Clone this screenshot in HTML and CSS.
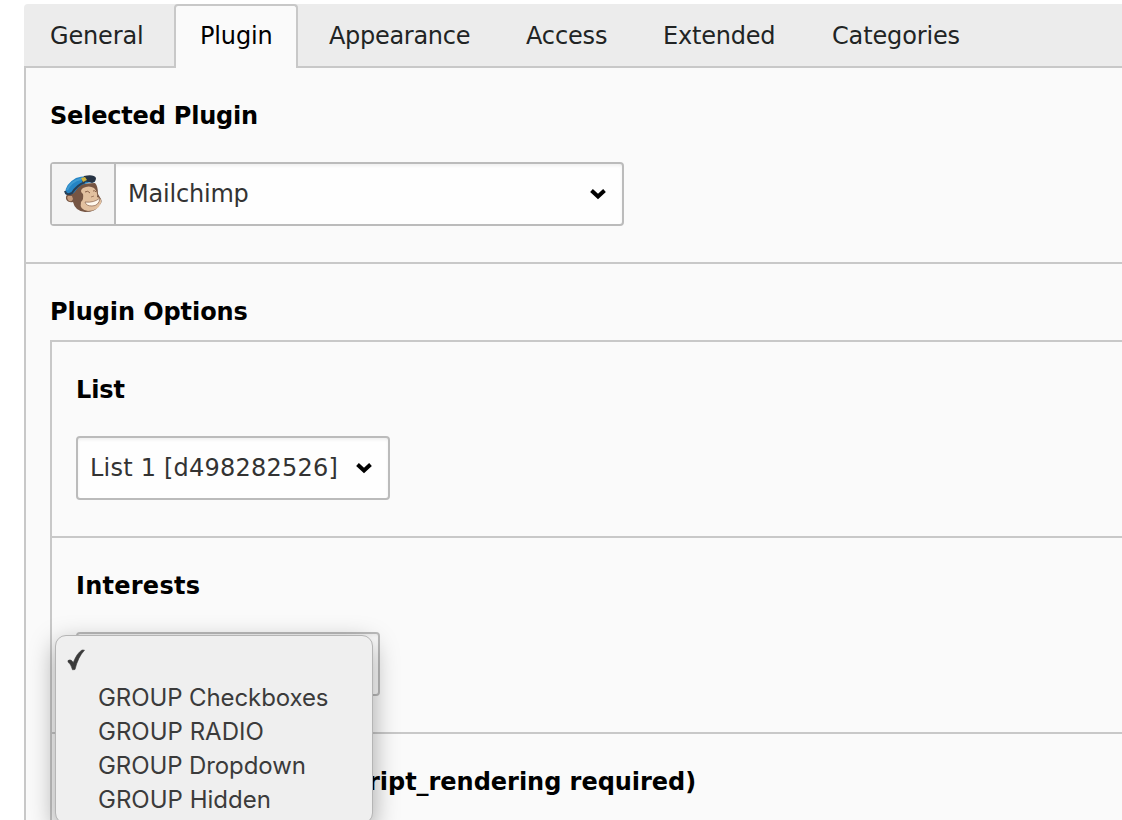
FILE: index.html
```
<!DOCTYPE html>
<html lang="en">
<head>
<meta charset="utf-8">
<title>Plugin</title>
<link rel="stylesheet" href="styles.css">
</head>
<body>
<nav class="tabs">
  <div class="tab t1">General</div>
  <div class="tab active">Plugin</div>
  <div class="tab t3">Appearance</div>
  <div class="tab t4">Access</div>
  <div class="tab t5">Extended</div>
  <div class="tab t6">Categories</div>
</nav>
<main class="pane">
  <section class="section first">
    <h4 class="label l1">Selected Plugin</h4>
    <div class="select plugin">
      <span class="addon">
        <svg width="40" height="40" viewBox="0 0 40 40">
          <path d="M8 19Q2 20 3 25Q5 29 10 28Q12 37 22 38Q33 38 35 32Q40 29 38 25L35 20Q35 12 32 9L14 10Z" fill="#765543"/>
          <path d="M5 22Q3 24 6 27Q9 28 10 25L9 22Z" fill="#c69c7c"/>
          <path d="M20 14Q26 11 31 14Q35 18 34 23Q39 24 38 29Q35 37 25 37Q16 36 18 28Q21 25 20 20Q16 17 20 14Z" fill="#e2c09f"/>
          <path d="M22 18q3-2 5 1M30 17q2-1 3 1" fill="none" stroke="#8a624a" stroke-width="1"/>
          <path d="M22 28Q31 29 37 24Q36 32 29 32Q23 32 22 28Z" fill="#fff8ed" stroke="#94705a" stroke-width=".8"/>
          <path d="M28 23l3-1" stroke="#a27c63" stroke-width="1"/>
          <path d="M2 20Q2 10 13 4Q21 1 30 3L32 8Q17 8 11 19L6 21Z" fill="#2584c4"/>
          <path d="M4 16Q8 7 18 5" fill="none" stroke="#3f9bd2" stroke-width="2"/>
          <path d="M2 17Q3 22 9 19Q14 11 22 8" fill="none" stroke="#263e56" stroke-width="2"/>
          <path d="M21 2Q31 0 33 4Q33 8 29 9Q26 7 19 8Z" fill="#263344"/>
          <path d="M18 4l4-1 2 3-4 2z" fill="#d2b43c"/>
        </svg>
      </span>
      <span class="value v1">Mailchimp</span>
      <svg class="chev" width="18" height="12" viewBox="0 0 18 12"><path d="M2.5 2.5L9 8.5L15.5 2.5" fill="none" stroke="#000" stroke-width="4"/></svg>
    </div>
  </section>
  <section class="options">
    <h4 class="label l2">Plugin Options</h4>
    <div class="group">
      <div class="field">
        <h4 class="label l3">List</h4>
        <div class="select list"><span class="value v2">List 1 [d498282526]</span>
          <svg class="chev" width="18" height="12" viewBox="0 0 18 12"><path d="M2.5 2.5L9 8.5L15.5 2.5" fill="none" stroke="#000" stroke-width="4"/></svg>
        </div>
      </div>
      <div class="field">
        <h4 class="label l4">Interests</h4>
        <div class="select interests"></div>
      </div>
      <div class="field last">
        <h4 class="label l5">ript_rendering required)</h4>
      </div>
    </div>
  </section>
</main>
<div class="menu">
  <div class="item check"><svg width="18" height="22" viewBox="0 0 18 22"><path d="M1 11.5Q4 9.5 6.3 13.5Q10 4 15 1L17.5 1.2Q11 8 8 20.5L5.5 20.8Q4 15 1 13Z" fill="#3b3b3b" stroke="#3b3b3b" stroke-width=".6"/></svg></div>
  <div class="item m1">GROUP Checkboxes</div>
  <div class="item m2">GROUP RADIO</div>
  <div class="item m3">GROUP Dropdown</div>
  <div class="item m4">GROUP Hidden</div>
</div>
</body>
</html>
```
FILE: styles.css
```
* { box-sizing: border-box; }
html { height: 820px; overflow: hidden; }
body { margin: 0; width: 1122px; height: 820px; overflow: hidden; position: relative; background: #fff; padding: 4px 0 0 24px; font: 24px/36px "DejaVu Sans", Verdana, sans-serif; color: #212424; white-space: nowrap; }
.tabs { display: flex; height: 64px; background: #ececec; border-radius: 4px 0 0 0; box-shadow: inset 0 -2px #c8c8c8; }
.tab { padding: 14px 0 0 26px; letter-spacing: -0.15px; }
.t1 { width: 150px; }
.active { width: 124px; padding-left: 24px; background: #fafafa; border: 2px solid #c8c8c8; border-bottom: 0; border-radius: 4px 4px 0 0; color: #000; padding-top: 12px; }
.t3 { width: 202px; padding-left: 31px; letter-spacing: -0.3px; }
.t4 { width: 137px; }
.t5 { width: 169px; letter-spacing: -0.2px; }
.pane { height: 752px; overflow: hidden; border-left: 2px solid #c8c8c8; background: #fafafa; }
.label { margin: 0; height: 35px; font-weight: bold; font-size: 24px; color: #000; }
.l1 { letter-spacing: -0.2px; }
.l2 { letter-spacing: -0.08px; }
.l3 { letter-spacing: -0.1px; }
.l4 { letter-spacing: 0.25px; }
.l5 { letter-spacing: -0.03px; }
.section { height: 196px; padding: 30px 0 0 24px; border-bottom: 2px solid #c8c8c8; }
.select { display: flex; align-items: center; height: 64px; margin-top: 29px; border: 2px solid #bbb; border-radius: 4px; background: #fefefe; box-shadow: inset 0 2px 3px #0000000f; color: #333; }
.plugin { width: 574px; }
.addon { display: flex; align-items: center; justify-content: center; width: 64px; height: 60px; background: #f4f4f4; border-right: 2px solid #bbb; }
.value { flex: 1; padding-left: 12px; }
.v1 { letter-spacing: -0.2px; }
.v2 { letter-spacing: 0.22px; }
.chev { margin-right: 15px; }
.options { padding: 30px 0 0 24px; }
.group { margin-top: 11px; border: 2px solid #c8c8c8; border-width: 2px 0 0 2px; }
.field { height: 196px; padding: 30px 0 0 24px; border-bottom: 2px solid #c8c8c8; }
.list { width: 314px; }
.interests { width: 304px; }
.last { height: 86px; padding-left: 316px; border: 0; }
.menu { position: absolute; left: 55px; top: 635px; width: 318px; height: 189px; padding-top: 9px; border: 1px solid #b5b5b5; border-radius: 11px; background: #efefef; box-shadow: 0 8px 26px #00000059; font: 24px/34px Inter, sans-serif; color: #3b3b3b; }
.item { height: 34px; padding-left: 42px; }
.m1, .m3 { letter-spacing: -0.1px; }
.check { height: 36px; padding: 4px 0 0 11px; line-height: 0; }
```
